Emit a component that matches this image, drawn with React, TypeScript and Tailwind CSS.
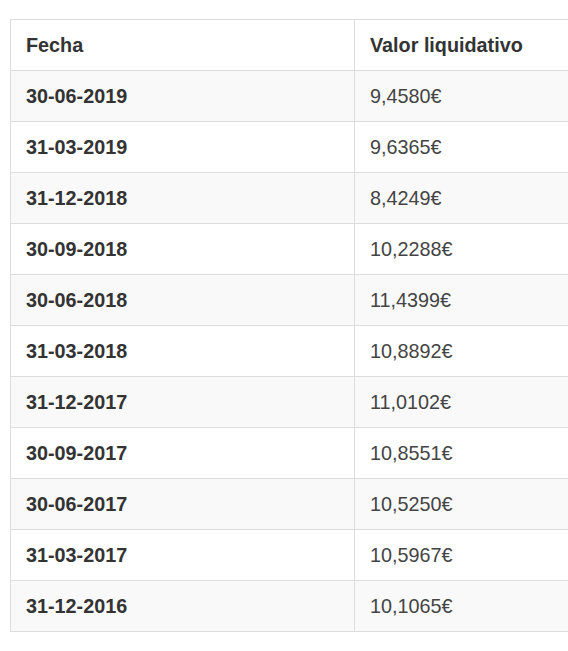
import React from 'react'

const rows = [
  ['30-06-2019', '9,4580€'],
  ['31-03-2019', '9,6365€'],
  ['31-12-2018', '8,4249€'],
  ['30-09-2018', '10,2288€'],
  ['30-06-2018', '11,4399€'],
  ['31-03-2018', '10,8892€'],
  ['31-12-2017', '11,0102€'],
  ['30-09-2017', '10,8551€'],
  ['30-06-2017', '10,5250€'],
  ['31-03-2017', '10,5967€'],
  ['31-12-2016', '10,1065€'],
]

export default function App() {
  return (
    <div className="bg-white h-[651px] w-[568px] overflow-hidden [font-family:'Liberation_Sans',Arial,sans-serif] text-[#333]">
      <div className="pt-[19px] pl-[10px]">
        <table className="border-collapse w-[640px] text-[19.8px] leading-[26px]">
          <thead>
            <tr>
              <th className="border border-[#ddd] w-[344px] pl-[15px] pr-[16px] py-[12px] text-left font-bold">
                Fecha
              </th>
              <th className="border border-[#ddd] pl-[15px] pr-[16px] py-[12px] text-left font-bold">
                Valor liquidativo
              </th>
            </tr>
          </thead>
          <tbody>
            {rows.map(([fecha, valor], i) => (
              <tr key={fecha} className={i % 2 === 0 ? 'bg-[#f9f9f9]' : 'bg-white'}>
                <td className="border border-[#ddd] pl-[15px] pr-[16px] py-[12px] font-bold">{fecha}</td>
                <td className="border border-[#ddd] pl-[15px] pr-[16px] py-[12px] text-[#444]">{valor}</td>
              </tr>
            ))}
          </tbody>
        </table>
      </div>
    </div>
  )
}
